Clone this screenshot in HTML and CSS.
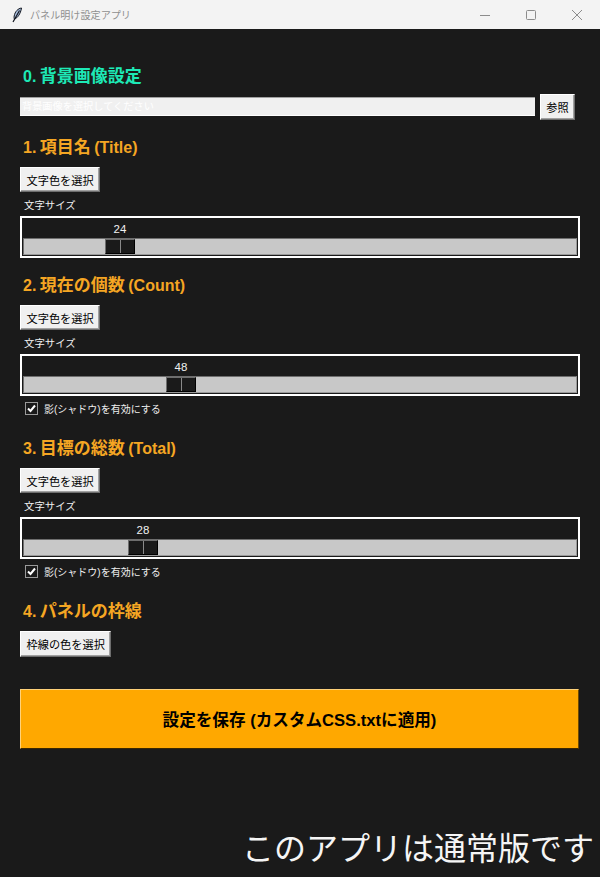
FILE: index.html
```html
<!DOCTYPE html>
<html lang="ja">
<head>
    <meta charset="UTF-8">
    <meta name="viewport" content="width=device-width, initial-scale=1.0">
    <title>パネル明け設定アプリ</title>
    <link rel="stylesheet" href="styles.css">
</head>
<body>
    <div class="window">
        <div class="titlebar">
            <svg class="feather" width="12" height="16" viewBox="0 0 12 16">
                <path d="M10.5 1 C7 1.5 4 4.5 3.2 9 C3 10.5 3 11.5 3.5 12 C6.5 11 9.5 7 10.5 1 Z" fill="#a9bedd" stroke="#10151f" stroke-width="1"/>
                <path d="M8.5 3.5 L2 15" stroke="#10151f" stroke-width="1.2" fill="none"/>
            </svg>
            <span class="app-title">パネル明け設定アプリ</span>
            <div class="window-controls">
                <svg width="10" height="10" viewBox="0 0 10 10"><path d="M0 5.5 H10" stroke="#8c8c8c" fill="none"/></svg>
                <svg width="10" height="10" viewBox="0 0 10 10"><rect x="0.5" y="0.5" width="9" height="9" rx="1" stroke="#8c8c8c" fill="none"/></svg>
                <svg width="10" height="10" viewBox="0 0 10 10"><path d="M0 0 L10 10 M10 0 L0 10" stroke="#8c8c8c" fill="none"/></svg>
            </div>
        </div>

        <div class="content">
            <div class="section first">
                <h2 class="heading teal">0. <span class="jp">背景画像設定</span></h2>
                <div class="file-row">
                    <div class="file-entry">背景画像を選択してください</div>
                    <button class="button">参照</button>
                </div>
            </div>

            <div class="section">
                <h2 class="heading">1. <span class="jp">項目名</span> (Title)</h2>
                <button class="button">文字色を選択</button>
                <div class="label">文字サイズ</div>
                <div class="scale">
                    <div class="scale-track">
                        <span class="scale-value" style="left: 96px">24</span>
                        <div class="scale-thumb" style="left: 81px"></div>
                    </div>
                </div>
            </div>

            <div class="section">
                <h2 class="heading">2. <span class="jp">現在の個数</span> (Count)</h2>
                <button class="button">文字色を選択</button>
                <div class="label">文字サイズ</div>
                <div class="scale">
                    <div class="scale-track">
                        <span class="scale-value" style="left: 157px">48</span>
                        <div class="scale-thumb" style="left: 142px"></div>
                    </div>
                </div>
                <label class="check">
                    <span class="check-box">
                        <svg width="9" height="9" viewBox="0 0 9 9"><path d="M1 4.5 L3.5 7 L8 1.5" stroke="#fff" stroke-width="2" fill="none"/></svg>
                    </span>
                    影(シャドウ)を有効にする
                </label>
            </div>

            <div class="section after-check">
                <h2 class="heading">3. <span class="jp">目標の総数</span> (Total)</h2>
                <button class="button">文字色を選択</button>
                <div class="label">文字サイズ</div>
                <div class="scale">
                    <div class="scale-track">
                        <span class="scale-value" style="left: 119px">28</span>
                        <div class="scale-thumb" style="left: 104px"></div>
                    </div>
                </div>
                <label class="check">
                    <span class="check-box">
                        <svg width="9" height="9" viewBox="0 0 9 9"><path d="M1 4.5 L3.5 7 L8 1.5" stroke="#fff" stroke-width="2" fill="none"/></svg>
                    </span>
                    影(シャドウ)を有効にする
                </label>
            </div>

            <div class="section after-check">
                <h2 class="heading">4. <span class="jp">パネルの枠線</span></h2>
                <button class="button tall">枠線の色を選択</button>
            </div>

            <button class="save-button">設定を保存 (カスタムCSS.txtに適用)</button>

            <div class="edition">このアプリは通常版です</div>
        </div>
    </div>
</body>
</html>
```

FILE: styles.css
```css
* {
    margin: 0;
    padding: 0;
    box-sizing: border-box;
    font-family: "Liberation Sans", "Noto Sans CJK JP", sans-serif;
}

body {
    background-color: #1a1a1a;
}

.window {
    width: 600px;
    height: 877px;
    display: flex;
    flex-direction: column;
    overflow: hidden;
}

.titlebar {
    height: 29px;
    flex-shrink: 0;
    background: #f3f3f3;
    display: flex;
    align-items: center;
    padding-left: 11px;
}

.feather {
    margin-right: 7px;
}

.app-title {
    font-size: 10.1px;
    color: #8f8f8f;
}

.window-controls {
    margin-left: auto;
    display: flex;
    gap: 36px;
    padding-right: 18px;
}

.content {
    flex: 1;
    display: flex;
    flex-direction: column;
    padding: 0 20px;
}

.section {
    margin-top: 17px;
    display: flex;
    flex-direction: column;
    align-items: flex-start;
}

.section.first {
    margin-top: 37px;
}

.section.after-check {
    margin-top: 23px;
}

.heading {
    height: 20px;
    line-height: 22px;
    font-size: 16px;
    word-spacing: -1px;
    font-weight: bold;
    color: #f5a623;
    padding-left: 3px;
    margin-bottom: 10px;
}

.heading .jp {
    font-size: 17px;
}

.heading.teal {
    color: #1de9b6;
    margin-bottom: 8px;
}

.file-row {
    width: 100%;
    display: flex;
    align-items: flex-start;
    gap: 5px;
}

.file-entry {
    width: 515px;
    height: 19px;
    margin-top: 3px;
    line-height: 17px;
    background: #f0f0f0;
    border-top: 1px solid #a0a0a0;
    border-bottom: 1px solid #fff;
    color: #fff;
    font-size: 10.2px;
    padding-left: 2px;
}

.button {
    height: 25px;
    padding: 0 5.5px;
    font-size: 11.2px;
    color: #000;
    background: #f0f0f0;
    border: 1px solid;
    border-color: #fff #6e6e6e #6e6e6e #fff;
    box-shadow: inset -1px -1px 0 #a0a0a0;
}

.file-row .button {
    height: 26px;
    width: 35px;
    padding: 0;
}

.button.tall {
    height: 26px;
}

.label {
    height: 14px;
    line-height: 16px;
    margin-top: 6px;
    margin-bottom: 4px;
    padding-left: 4px;
    font-size: 10.4px;
    color: #f0f0f0;
}

.scale {
    width: 560px;
    height: 42px;
    border: 2px solid #fff;
    padding: 20px 1px 1px;
}

.scale-track {
    position: relative;
    height: 17px;
    background: #c8c8c8;
    border: 1px solid;
    border-color: #6e6e6e #9a9a9a #9a9a9a #6e6e6e;
}

.scale-value {
    position: absolute;
    top: -17px;
    transform: translateX(-50%);
    font-size: 11.5px;
    line-height: 14px;
    color: #f0f0f0;
}

.scale-thumb {
    position: absolute;
    top: 0;
    width: 30px;
    height: 15px;
    background: linear-gradient(to right, #1a1a1a 14px, #8a8a8a 14px, #8a8a8a 15px, #1a1a1a 15px);
    border: 1px solid;
    border-color: #6e6e6e #000 #000 #6e6e6e;
}

.check {
    height: 14px;
    margin-top: 5px;
    margin-left: 5px;
    display: flex;
    align-items: center;
    gap: 6px;
    font-size: 10px;
    color: #f0f0f0;
}

.check-box {
    width: 13px;
    height: 13px;
    border: 1px solid #9a9a9a;
    background: #1a1a1a;
    display: flex;
    align-items: center;
    justify-content: center;
}

.save-button {
    margin-top: 32px;
    width: 559px;
    height: 60px;
    flex-shrink: 0;
    background: #ffa800;
    border: 1px solid;
    border-color: #ffd27a #6e4a00 #3a2700 #ffd27a;
    font-size: 16.6px;
    font-weight: bold;
    color: #000;
}

.edition {
    margin-top: auto;
    margin-bottom: 8px;
    margin-right: -14px;
    height: 40px;
    line-height: 40px;
    text-align: right;
    font-size: 32px;
    font-weight: 400;
    color: #f5f5f5;
}
```
